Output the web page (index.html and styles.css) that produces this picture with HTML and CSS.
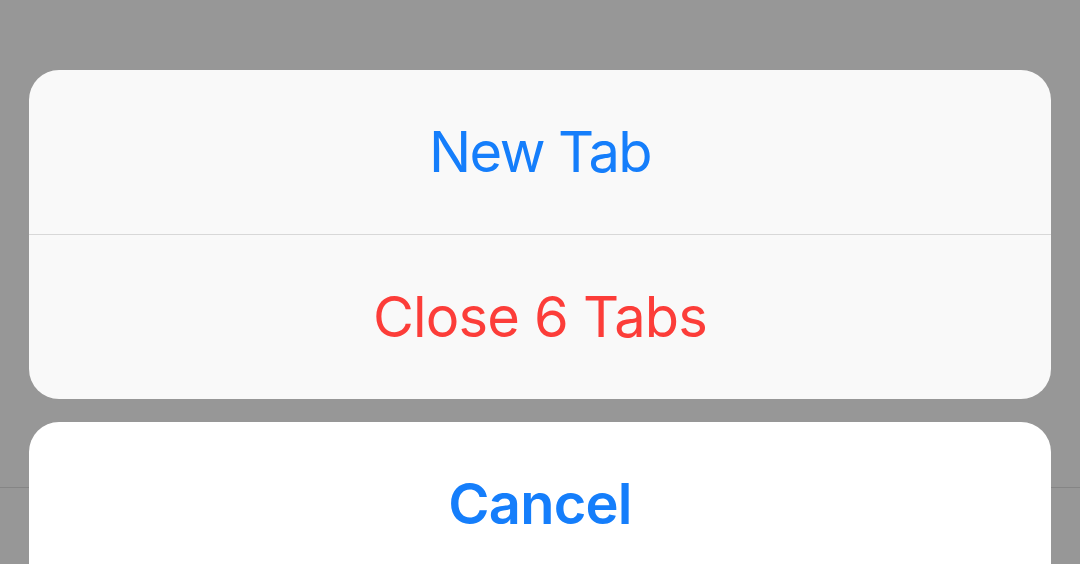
FILE: index.html
```html
<!DOCTYPE html>
<html>
<head>
<meta charset="utf-8">
<link rel="stylesheet" href="styles.css">
</head>
<body>
<div class="screen">
  <div class="toolbar-line"></div>
  <div class="sheet">
    <div class="group">
      <div class="row action tight">New Tab</div>
      <div class="sep"></div>
      <div class="row destructive">Close 6 Tabs</div>
    </div>
    <div class="cancel">
      <div class="row action bold">Cancel</div>
    </div>
  </div>
</div>
</body>
</html>
```
FILE: styles.css
```css
html, body {
  margin: 0;
  padding: 0;
  width: 1080px;
  height: 564px;
  overflow: hidden;
  background: #979797;
}
.screen {
  position: relative;
  width: 1080px;
  height: 564px;
  overflow: hidden;
  font-family: Inter, "Liberation Sans", sans-serif;
}
.toolbar-line {
  position: absolute;
  left: 0;
  right: 0;
  top: 487px;
  height: 1px;
  background: #858585;
}
.sheet {
  position: relative;
  display: flex;
  flex-direction: column;
  gap: 23px;
  padding: 70px 29px 0 29px;
}
.group {
  background: #f9f9f9;
  border-radius: 30px;
  overflow: hidden;
  display: flex;
  flex-direction: column;
}
.sep {
  height: 1px;
  background: #d8d8d8;
}
.row {
  height: 164px;
  flex-shrink: 0;
  display: flex;
  align-items: center;
  justify-content: center;
  font-size: 56px;
  letter-spacing: -0.8px;
}
.tight { letter-spacing: -1.6px; }
.action { color: #157efb; }
.destructive { color: #fc3d39; }
.cancel {
  background: #ffffff;
  border-radius: 30px 30px 0 0;
  height: 142px;
  overflow: hidden;
}
.bold { font-weight: 600; }
```
